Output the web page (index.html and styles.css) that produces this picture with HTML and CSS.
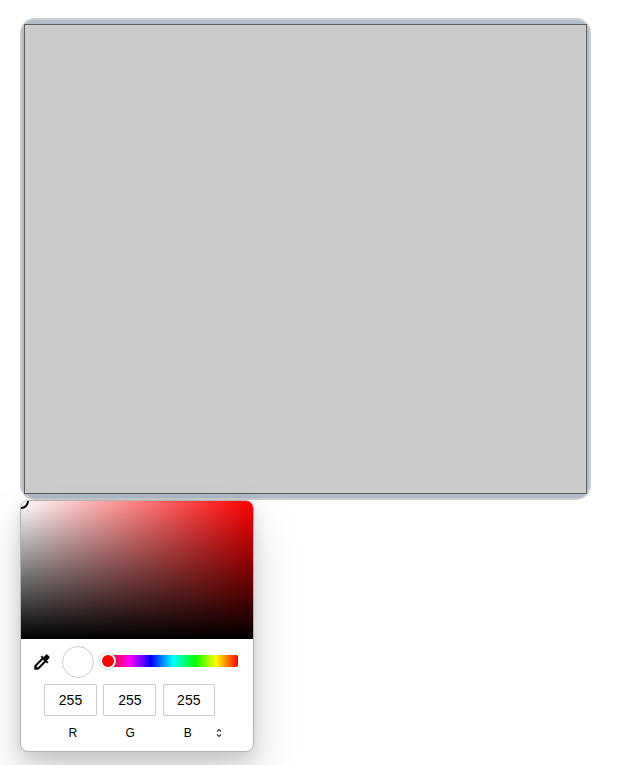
FILE: index.html
```
<!DOCTYPE html>
<html lang="en">
<head>
<meta charset="utf-8">
<title>Color input</title>
<link rel="stylesheet" href="styles.css">
</head>
<body>
<div class="color-input"><div class="swatch"></div></div>
<div class="picker">
  <div class="spectrum"><span class="spectrum-handle"></span></div>
  <div class="controls">
    <svg class="dropper" viewBox="0 0 24 24"><path d="M20.71 5.63l-2.34-2.34c-.39-.39-1.02-.39-1.41 0l-3.12 3.12-1.93-1.91-1.41 1.41 1.42 1.42L3 16.25V21h4.75l8.92-8.92 1.42 1.42 1.41-1.41-1.92-1.92 3.12-3.12c.4-.4.4-1.03.01-1.42zM6.92 19L5 17.08l8.06-8.06 1.92 1.92L6.92 19z"/></svg>
    <span class="preview"></span>
    <div class="hue"><span class="hue-handle"></span></div>
  </div>
  <div class="values">
    <div class="value">255</div>
    <div class="value">255</div>
    <div class="value">255</div>
  </div>
  <div class="labels">
    <span class="label">R</span>
    <span class="label">G</span>
    <span class="label">B</span>
    <svg class="toggle" viewBox="0 0 8 12"><path d="M2 4.5 4 2.5l2 2M2 7.5l2 2 2-2"/></svg>
  </div>
</div>
</body>
</html>
```
FILE: styles.css
```
* { box-sizing: border-box; }
html { height: 100%; overflow: hidden; }
body {
  height: 100%;
  margin: 0;
  padding: 18px 0 0 20px;
  overflow: hidden;
  background: #fff;
  color: #000;
  font-family: "Liberation Sans", Arial, sans-serif;
}
.color-input {
  width: 571px;
  height: 482px;
  padding: 4px 2px;
  border: 2px solid #ccc;
  border-radius: 15px;
  background: #afbccc;
}
.swatch {
  height: 470px;
  border: 1px solid #5f5f5f;
  background: #ccc;
}
.picker {
  position: relative;
  width: 234px;
  height: 252px;
  border: 1px solid #b2b2b2;
  border-radius: 8px;
  background: #fff;
  box-shadow: 0 24px 48px rgba(0, 0, 0, .17), 0 6px 16px rgba(0, 0, 0, .12);
}
.spectrum {
  position: relative;
  height: 138px;
  overflow: hidden;
  border-radius: 7px 7px 0 0;
  background: linear-gradient(to bottom, transparent, #000), linear-gradient(to right, #fff, #f00);
}
.spectrum-handle {
  position: absolute;
  top: -8px;
  left: -8px;
  width: 16px;
  height: 16px;
  border: 2px solid #000;
  border-radius: 50%;
}
.controls {
  display: flex;
  align-items: center;
  height: 45px;
  padding-left: 11px;
}
.dropper {
  width: 20px;
  height: 20px;
  margin-right: 10px;
  stroke: #000;
  stroke-width: .5;
}
.preview {
  width: 32px;
  height: 32px;
  margin-right: 14px;
  border: 1px solid #ccc;
  border-radius: 50%;
}
.hue {
  position: relative;
  width: 130px;
  height: 12px;
  margin-bottom: 1px;
  border-radius: 2px;
  background: linear-gradient(to left, #f00, #ff0 17%, #0f0 33%, #0ff 50%, #00f 67%, #f0f 83%, #f00);
}
.hue-handle {
  position: absolute;
  top: -2px;
  left: -8px;
  width: 16px;
  height: 16px;
  border: 2px solid #fff;
  border-radius: 50%;
  background: #f00;
  box-shadow: 0 0 3px rgba(0, 0, 0, .3);
}
.values {
  display: grid;
  grid-template-columns: 53px 53px 52px;
  column-gap: 6.4px;
  padding-left: 23px;
}
.value {
  height: 32px;
  border: 1px solid #ccc;
  border-radius: 2px;
  font-size: 14px;
  line-height: 31px;
  text-align: center;
}
.labels {
  display: flex;
  align-items: center;
  height: 34px;
  padding-left: 23px;
  font-size: 12px;
}
.label { width: 57.5px; text-align: center; }
.toggle {
  width: 8px;
  height: 12px;
  margin-left: -2px;
  fill: none;
  stroke: #333;
  stroke-width: 1.1;
}
```
